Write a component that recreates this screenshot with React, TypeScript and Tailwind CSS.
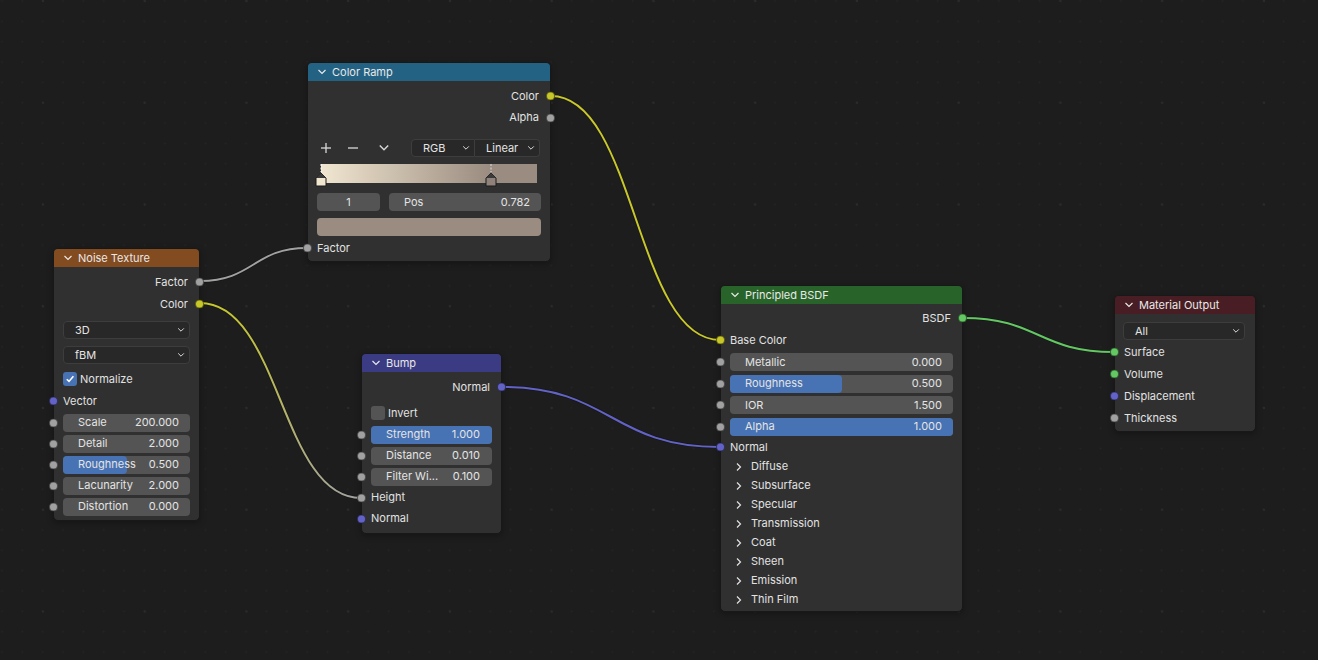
import type { ReactNode } from 'react';

const SOCKET = {
  grey: 'bg-[#a1a1a1]',
  yellow: 'bg-[#c7c729]',
  purple: 'bg-[#6363c7]',
  green: 'bg-[#63c763]',
};

type SocketColor = keyof typeof SOCKET;

const Socket = ({ color, side }: { color: SocketColor; side: 'in' | 'out' }) => (
  <span
    className={`absolute top-1/2 h-[9px] w-[9px] -translate-y-1/2 rounded-full border border-black/50 ${SOCKET[color]} ${
      side === 'in' ? 'left-[-5px]' : 'right-[-5px]'
    }`}
  />
);

const Chevron = ({ dir = 'down', className = '' }: { dir?: 'down' | 'right'; className?: string }) => (
  <svg viewBox="0 0 10 10" className={className} fill="none" stroke="currentColor" strokeWidth="1.2">
    {dir === 'down' ? <polyline points="1.5,3 5,6.5 8.5,3" /> : <polyline points="3,1.5 6.5,5 3,8.5" />}
  </svg>
);

const Node = ({
  left,
  top,
  width,
  title,
  header,
  children,
}: {
  left: number;
  top: number;
  width: number;
  title: string;
  header: string;
  children: ReactNode;
}) => (
  <div
    className="absolute flex flex-col rounded-[5px] border border-[#181818] bg-[#303030] shadow-[0_2px_6px_rgba(0,0,0,0.3)]"
    style={{ left, top, width }}
  >
    <div className={`flex h-[18px] items-center gap-[5px] rounded-t-[4px] pl-[9px] text-[#e8e8e8] ${header}`}>
      <Chevron className="h-[10px] w-[10px]" />
      <span>{title}</span>
    </div>
    {children}
  </div>
);

const OutRow = ({ label, color, h = 22 }: { label: string; color: SocketColor; h?: number }) => (
  <div className="relative flex items-center justify-end pr-[11px]" style={{ height: h }}>
    <span>{label}</span>
    <Socket color={color} side="out" />
  </div>
);

const InRow = ({ label, color, h = 22 }: { label: string; color: SocketColor; h?: number }) => (
  <div className="relative flex items-center pl-[9px]" style={{ height: h }}>
    <span>{label}</span>
    <Socket color={color} side="in" />
  </div>
);

const Field = ({
  label,
  value,
  fill = 0,
  h = 21,
  pr = 11,
}: {
  label: string;
  value: string;
  fill?: number;
  h?: number;
  pr?: number;
}) => (
  <div className="relative flex items-center px-[9px]" style={{ height: h }}>
    <Socket color="grey" side="in" />
    <div className="relative flex h-[18px] w-full items-center rounded-[4px] bg-[#545454] text-[#e4e4e4]">
      {fill > 0 && (
        <div className="absolute inset-y-0 left-0 rounded-[4px] bg-[#4772b3]" style={{ width: `${fill * 100}%` }} />
      )}
      <span className="relative whitespace-nowrap pl-[15px]">{label}</span>
      <span className="relative ml-auto whitespace-nowrap" style={{ paddingRight: pr }}>
        {value}
      </span>
    </div>
  </div>
);

const Dropdown = ({ label, className = '' }: { label: string; className?: string }) => (
  <div
    className={`flex h-[18px] items-center justify-between rounded-[4px] border border-[#3d3d3d] bg-[#282828] pl-[11px] pr-[4px] text-[#e4e4e4] ${className}`}
  >
    <span>{label}</span>
    <Chevron className="h-[8px] w-[8px]" />
  </div>
);

const Checkbox = ({ label, checked }: { label: string; checked?: boolean }) => (
  <div className="flex items-center gap-[3px]">
    <span
      className={`flex h-[14px] w-[14px] items-center justify-center rounded-[3px] ${
        checked ? 'bg-[#4772b3]' : 'bg-[#545454]'
      }`}
    >
      {checked && (
        <svg viewBox="0 0 10 10" className="h-[10px] w-[10px]" fill="none" stroke="white" strokeWidth="1.6">
          <polyline points="1.8,5.2 4,7.4 8.4,2.2" />
        </svg>
      )}
    </span>
    <span>{label}</span>
  </div>
);

const StopMarker = ({ fill, selected }: { fill: string; selected?: boolean }) => (
  <svg viewBox="0 0 12 23" className="h-[23px] w-[12px]">
    <line x1="6" y1="0" x2="6" y2="8" stroke={selected ? '#ffffff' : '#dddddd'} strokeWidth="1" strokeDasharray="2 1.5" />
    <path d="M1 14 L6 9 L11 14 L11 22 L1 22 Z" fill={fill} stroke="#1a1a1a" strokeWidth="1" />
    <path d="M1 14 L6 9 L11 14 Z" fill="#3a3a3a" />
  </svg>
);

const wire = (x1: number, y1: number, x2: number, y2: number) => {
  const d = Math.max(Math.abs(x2 - x1) * 0.5, 30);
  return `M${x1} ${y1} C${x1 + d} ${y1} ${x2 - d} ${y2} ${x2} ${y2}`;
};

const WIRES = [
  { d: wire(200, 281, 307, 248), stroke: '#a1a1a1' },
  { d: wire(200, 303, 361, 498), stroke: 'url(#yg)' },
  { d: wire(551, 96, 720, 340), stroke: '#c8c82a' },
  { d: wire(502, 387, 720, 447), stroke: '#6363c7' },
  { d: wire(963, 318, 1114, 352), stroke: '#63c763' },
];

const Wires = () => (
  <svg className="absolute inset-0 h-full w-full" viewBox="0 0 1318 660">
    <defs>
      <linearGradient id="yg" gradientUnits="userSpaceOnUse" x1="200" y1="303" x2="361" y2="498">
        <stop offset="0" stopColor="#c7c729" />
        <stop offset="1" stopColor="#a1a1a1" />
      </linearGradient>
    </defs>
    {WIRES.map((w, i) => (
      <g key={i} fill="none">
        <path d={w.d} stroke="#101010" strokeWidth="3.4" strokeOpacity="0.45" />
        <path d={w.d} stroke={w.stroke} strokeWidth="2" />
      </g>
    ))}
  </svg>
);

export default function App() {
  return (
    <div
      className="relative h-[660px] w-[1318px] overflow-hidden bg-[#1d1d1d] bg-[radial-gradient(circle,#2b2b2b_1.2px,transparent_1.6px),radial-gradient(circle,#242424_0.8px,transparent_1.1px)] bg-[length:101.75px_101.75px,20.35px_20.35px] bg-[position:-7.9px_-49.9px,-8.2px_-9.2px] text-[11px] leading-none text-[#e2e2e2]"
      style={{ fontFamily: 'Inter, "DejaVu Sans", sans-serif' }}
    >
      <Wires />

      {/* Color Ramp */}
      <Node left={307} top={62} width={244} title="Color Ramp" header="bg-[#246283]">
        <div className="pt-[4px]" />
        <OutRow label="Color" color="yellow" />
        <OutRow label="Alpha" color="grey" h={21} />
        <div className="mt-[10px] flex h-[20px] items-center pr-[10px] text-[#d8d8d8]">
          <svg viewBox="0 0 12 12" className="ml-[12px] h-[12px] w-[12px]" stroke="currentColor" strokeWidth="1.3">
            <line x1="6" y1="1" x2="6" y2="11" />
            <line x1="1" y1="6" x2="11" y2="6" />
          </svg>
          <svg viewBox="0 0 12 12" className="ml-[15px] h-[12px] w-[12px]" stroke="currentColor" strokeWidth="1.3">
            <line x1="1" y1="6" x2="11" y2="6" />
          </svg>
          <Chevron className="ml-[19px] h-[12px] w-[12px]" />
          <div className="ml-auto flex">
            <Dropdown label="RGB" className="w-[64px] rounded-r-none pl-[6px]" />
            <Dropdown label="Linear" className="w-[65px] rounded-l-none border-l-0 pl-[6px]" />
          </div>
        </div>
        <div className="relative mx-[13px] mt-[6px] h-[19px] bg-[linear-gradient(to_right,#f1e6d0,#9a8c80_78.2%,#9a8c80)]">
          <div className="absolute left-[-6px] top-0">
            <StopMarker fill="#f1e6d0" selected />
          </div>
          <div className="absolute left-[164px] top-0">
            <StopMarker fill="#8f827a" />
          </div>
        </div>
        <div className="mt-[10px] flex gap-[9px] px-[9px] text-[#e4e4e4]">
          <div className="flex h-[18px] w-[63px] items-center justify-center rounded-[4px] bg-[#545454]">1</div>
          <div className="flex h-[18px] flex-1 items-center rounded-[4px] bg-[#545454] pl-[15px] pr-[11px]">
            <span>Pos</span>
            <span className="ml-auto">0.782</span>
          </div>
        </div>
        <div className="mx-[9px] mt-[7px] h-[18px] rounded-[4px] bg-[#9a8c80]" />
        <div className="mt-[2px]" />
        <InRow label="Factor" color="grey" h={20} />
        <div className="pb-[3px]" />
      </Node>

      {/* Noise Texture */}
      <Node left={53} top={248} width={147} title="Noise Texture" header="bg-[#834b20]">
        <div className="pt-[4px]" />
        <OutRow label="Factor" color="grey" />
        <OutRow label="Color" color="yellow" />
        <div className="mt-[6px] px-[9px]">
          <Dropdown label="3D" />
        </div>
        <div className="mt-[7px] px-[9px]">
          <Dropdown label="fBM" />
        </div>
        <div className="mt-[4px] flex h-[22px] items-center px-[9px]">
          <Checkbox label="Normalize" checked />
        </div>
        <InRow label="Vector" color="purple" />
        <Field label="Scale" value="200.000" />
        <Field label="Detail" value="2.000" />
        <Field label="Roughness" value="0.500" fill={0.5} />
        <Field label="Lacunarity" value="2.000" />
        <Field label="Distortion" value="0.000" />
        <div className="pb-[3px]" />
      </Node>

      {/* Bump */}
      <Node left={361} top={353} width={141} title="Bump" header="bg-[#3b3b83]">
        <div className="pt-[4px]" />
        <OutRow label="Normal" color="purple" />
        <div className="mt-[4px] flex h-[22px] items-center px-[9px]">
          <Checkbox label="Invert" />
        </div>
        <Field label="Strength" value="1.000" fill={1} pr={12} />
        <Field label="Distance" value="0.010" pr={12} />
        <Field label="Filter Wi..." value="0.100" pr={12} />
        <InRow label="Height" color="grey" h={21} />
        <InRow label="Normal" color="purple" h={21} />
        <div className="pb-[4px]" />
      </Node>

      {/* Principled BSDF */}
      <Node left={720} top={285} width={243} title="Principled BSDF" header="bg-[#28642a]">
        <div className="pt-[3px]" />
        <OutRow label="BSDF" color="green" />
        <InRow label="Base Color" color="yellow" />
        <Field label="Metallic" value="0.000" h={22} />
        <Field label="Roughness" value="0.500" fill={0.5} />
        <Field label="IOR" value="1.500" h={22} />
        <Field label="Alpha" value="1.000" fill={1} />
        <InRow label="Normal" color="purple" h={20} />
        {['Diffuse', 'Subsurface', 'Specular', 'Transmission', 'Coat', 'Sheen', 'Emission', 'Thin Film'].map((p) => (
          <div key={p} className="flex h-[19px] items-center pl-[13px]">
            <Chevron dir="right" className="h-[10px] w-[10px]" />
            <span className="ml-[7px]">{p}</span>
          </div>
        ))}
        <div className="pb-[2px]" />
      </Node>

      {/* Material Output */}
      <Node left={1114} top={295} width={142} title="Material Output" header="bg-[#481e24]">
        <div className="mt-[8px] pl-[8px] pr-[10px]">
          <Dropdown label="All" className="pl-[8px]" />
        </div>
        <div className="mt-[1px]" />
        <InRow label="Surface" color="green" />
        <InRow label="Volume" color="green" />
        <InRow label="Displacement" color="purple" />
        <InRow label="Thickness" color="grey" />
        <div className="pb-[2px]" />
      </Node>
    </div>
  );
}
